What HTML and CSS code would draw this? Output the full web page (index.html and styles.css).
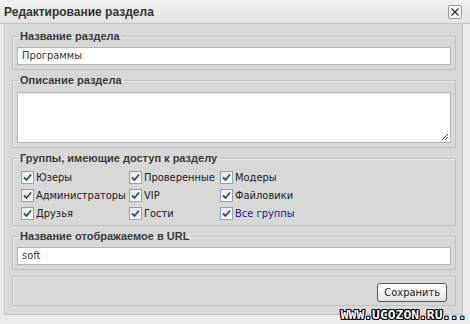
FILE: index.html
```html
<!DOCTYPE html>
<html lang="ru">
<head>
<meta charset="utf-8">
<title>Редактирование раздела</title>
<link rel="stylesheet" href="styles.css">
</head>
<body>
<div class="dialog">
  <div class="titlebar">
    <span class="title">Редактирование раздела</span>
    <span class="close"><svg width="10" height="10" viewBox="0 0 10 10"><path d="M1.5 1.5 L8.5 8.5 M8.5 1.5 L1.5 8.5" stroke="#333" stroke-width="1.3"/></svg></span>
  </div>
  <div class="panel">
    <fieldset class="fs">
      <legend>Название раздела</legend>
      <div class="input">Программы</div>
    </fieldset>
    <fieldset class="fs">
      <legend>Описание раздела</legend>
      <div class="textarea"><span class="grip"><svg width="8" height="8" viewBox="0 0 8 8"><path d="M1 7 L7 1 M4 7 L7 4" stroke="#444" stroke-width="1"/></svg></span></div>
    </fieldset>
    <fieldset class="fs">
      <legend>Группы, имеющие доступ к разделу</legend>
      <div class="groups">
        <label class="cb"><span class="box"><svg width="9" height="9" viewBox="0 0 9 9"><path d="M1 4.5 L3.5 7 L8 1.5" fill="none" stroke="#3a4a5a" stroke-width="1.8"/></svg></span>Юзеры</label>
        <label class="cb"><span class="box"><svg width="9" height="9" viewBox="0 0 9 9"><path d="M1 4.5 L3.5 7 L8 1.5" fill="none" stroke="#3a4a5a" stroke-width="1.8"/></svg></span>Проверенные</label>
        <label class="cb"><span class="box"><svg width="9" height="9" viewBox="0 0 9 9"><path d="M1 4.5 L3.5 7 L8 1.5" fill="none" stroke="#3a4a5a" stroke-width="1.8"/></svg></span>Модеры</label>
        <label class="cb"><span class="box"><svg width="9" height="9" viewBox="0 0 9 9"><path d="M1 4.5 L3.5 7 L8 1.5" fill="none" stroke="#3a4a5a" stroke-width="1.8"/></svg></span>Администраторы</label>
        <label class="cb"><span class="box"><svg width="9" height="9" viewBox="0 0 9 9"><path d="M1 4.5 L3.5 7 L8 1.5" fill="none" stroke="#3a4a5a" stroke-width="1.8"/></svg></span>VIP</label>
        <label class="cb"><span class="box"><svg width="9" height="9" viewBox="0 0 9 9"><path d="M1 4.5 L3.5 7 L8 1.5" fill="none" stroke="#3a4a5a" stroke-width="1.8"/></svg></span>Файловики</label>
        <label class="cb"><span class="box"><svg width="9" height="9" viewBox="0 0 9 9"><path d="M1 4.5 L3.5 7 L8 1.5" fill="none" stroke="#3a4a5a" stroke-width="1.8"/></svg></span>Друзья</label>
        <label class="cb"><span class="box"><svg width="9" height="9" viewBox="0 0 9 9"><path d="M1 4.5 L3.5 7 L8 1.5" fill="none" stroke="#3a4a5a" stroke-width="1.8"/></svg></span>Гости</label>
        <label class="cb all"><span class="box"><svg width="9" height="9" viewBox="0 0 9 9"><path d="M1 4.5 L3.5 7 L8 1.5" fill="none" stroke="#3a4a5a" stroke-width="1.8"/></svg></span>Все группы</label>
      </div>
    </fieldset>
    <fieldset class="fs">
      <legend>Название отображаемое в URL</legend>
      <div class="input">soft</div>
    </fieldset>
    <div class="actions">
      <span class="btn">Сохранить</span>
    </div>
  </div>
  <div class="watermark">WWW.UCOZON.RU...</div>
</div>
</body>
</html>
```
FILE: styles.css
```css
html, body {
  margin: 0;
  padding: 0;
  background: #ececec;
}
body {
  width: 470px;
  height: 324px;
  overflow: hidden;
  font-family: "DejaVu Sans Condensed", "DejaVu Sans", sans-serif;
  font-size: 11px;
  color: #222;
}
.dialog {
  position: relative;
  width: 470px;
  height: 324px;
  background: #ebebeb;
}
.titlebar {
  height: 24px;
  display: flex;
  align-items: center;
  justify-content: space-between;
  padding: 0 8px 0 4px;
  background: linear-gradient(#f4f4f4, #e2e2e2);
  border-bottom: 1px solid #c4c4c4;
  box-sizing: border-box;
}
.title {
  font-family: "Liberation Sans", Arial, sans-serif;
  font-weight: bold;
  font-size: 12px;
  color: #333;
  padding-top: 1px;
}
.close {
  width: 12px;
  height: 12px;
  border: 1px solid #9a9a9a;
  border-radius: 2px;
  background: #f6f6f6;
  display: flex;
  align-items: center;
  justify-content: center;
}
.panel {
  display: flex;
  flex-direction: column;
  gap: 4px;
  margin: 0 7px 0 4px;
  padding: 6px 6px 8px 7px;
  background: #d8d8d8;
  border: 1px solid #c2c2c2;
  border-top: none;
  box-shadow: inset 1px 0 0 #e6e6e6;
  height: 291px;
  box-sizing: border-box;
}
.fs {
  margin: 0;
  padding: 0 4px 4px 4px;
  border: 1px solid #c0c0c0;
  box-shadow: inset 1px 1px 0 #e9e9e9;
  min-width: 0;
}
legend {
  font-family: "Liberation Sans", Arial, sans-serif;
  font-weight: bold;
  color: #3a3a3a;
  padding: 0 2px;
  margin-left: 1px;
  line-height: 13px;
}
.input {
  height: 18px;
  box-sizing: border-box;
  background: #fff;
  border: 1px solid #b5b5b5;
  padding: 0 4px;
  line-height: 16px;
  color: #333;
  margin-top: 4px;
}
.textarea {
  position: relative;
  height: 51px;
  box-sizing: border-box;
  background: linear-gradient(#eaeeee, #fff 4px);
  border: 1px solid #b5b5b5;
  margin-top: 5px;
}
.grip {
  position: absolute;
  right: 1px;
  bottom: 1px;
  line-height: 0;
}
.groups {
  display: grid;
  grid-template-columns: 108px 91px auto;
  row-gap: 2px;
  padding: 4px 0 0 4px;
}
.cb {
  display: flex;
  align-items: center;
  height: 16px;
  white-space: nowrap;
  color: #222;
}
.cb.all {
  color: #1a1aa8;
}
.box {
  width: 11px;
  height: 11px;
  border: 1px solid #8fa3b8;
  background: linear-gradient(135deg, #e4e8ee, #fdfdfd);
  display: inline-flex;
  align-items: center;
  justify-content: center;
  margin-right: 2px;
}
.actions {
  display: flex;
  justify-content: flex-end;
  align-items: flex-start;
  height: 30px;
  box-sizing: border-box;
  border: 1px solid #c0c0c0;
  box-shadow: inset 1px 1px 0 #e9e9e9;
  padding: 6px 8px 0 0;
  margin-top: 2px;
}
.btn {
  height: 19px;
  box-sizing: border-box;
  padding: 0 6px;
  border: 1px solid #555;
  border-radius: 3px;
  background: linear-gradient(#ffffff, #e4e4e4);
  line-height: 17px;
  font-size: 11px;
  color: #222;
}
.watermark {
  position: absolute;
  right: 4px;
  bottom: 2px;
  font-family: "DejaVu Sans Mono", monospace;
  font-weight: bold;
  font-size: 13px;
  color: #fff;
  text-shadow: 1px 0 0 #000, -1px 0 0 #000, 0 1px 0 #000, 0 -1px 0 #000, 1px 1px 0 #000, -1px -1px 0 #000, 1px -1px 0 #000, -1px 1px 0 #000;
}
```
